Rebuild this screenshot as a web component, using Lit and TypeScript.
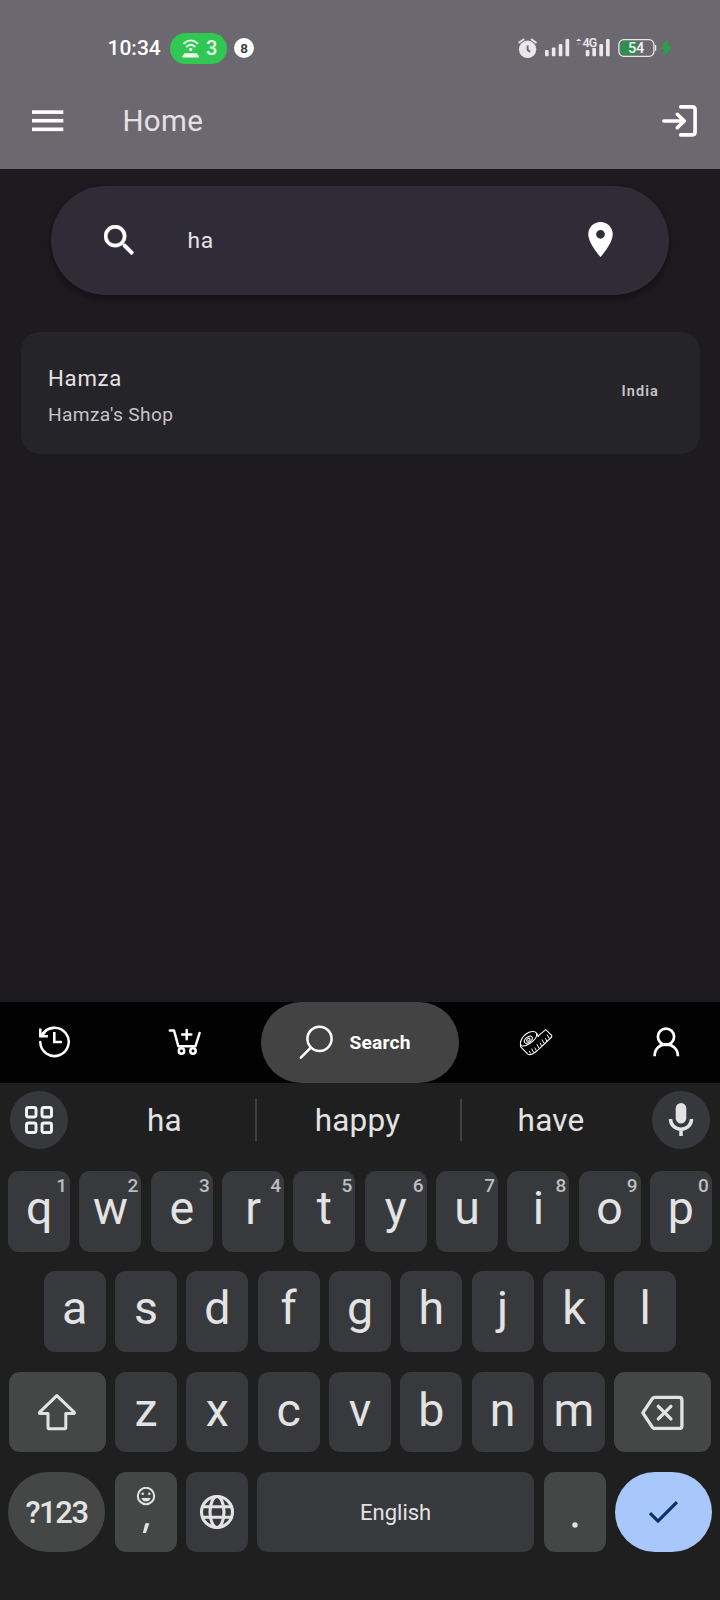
import { LitElement, html, css, svg } from "lit";
import { customElement, property } from "lit/decorators.js";

@customElement("status-bar")
class StatusBar extends LitElement {
  static styles = css`
    :host { display: flex; align-items: center; height: 96px; padding-left: 107.5px; box-sizing: border-box; }
    .time { font-size: 21px; font-weight: 500; line-height: 24px; color: #fff; width: 62px; }
    .pill { display: flex; align-items: center; width: 57.5px; height: 31px; border-radius: 16px; background: #30c752; }
    .pill svg { margin-left: 11px; }
    .count { margin-left: 7.5px; font-size: 20px; font-weight: 500; line-height: 24px; color: #eafbe9; }
    .badge { display: grid; place-items: center; margin-left: 7px; width: 20px; height: 20px; border-radius: 50%; background: #fff; color: #3a383e; font-size: 13.5px; font-weight: 600; line-height: 20px; }
    .right { display: flex; margin-left: 264px; }
    svg { display: block; }
    .g { font: 600 12.5px Roboto, sans-serif; letter-spacing: -0.9px; fill: #e9e7ea; stroke: #6b686f; stroke-width: 1.6px; paint-order: stroke; }
    .b { font: 500 14.5px Roboto, sans-serif; letter-spacing: -0.2px; fill: #f4f4f4; }
  `;
  render() {
    return html`
      <div class="time">10:34</div>
      <div class="pill">
        <svg width="18" height="20" viewBox="180 37 18 20" fill="none" stroke="#eafbe9" stroke-width="1.9" stroke-linecap="round">
          <path d="M183 42.400c4-4 9.500-4 13.500 0M185.800 45.500c2.500-2.300 5.500-2.300 8 0" />
          <circle cx="189.700" cy="48.400" r="1.700" fill="#eafbe9" stroke="none" />
          <path d="M183.500 52.300h12.500l2 3.300q.3.900-.8.900h-15.200q-1.100 0-.8-.9z" fill="#eafbe9" stroke="none" />
        </svg>
        <span class="count">3</span>
      </div>
      <div class="badge">8</div>
      <div class="right">
        <svg width="20" height="24" viewBox="518 36 20 24">
          <circle cx="527.600" cy="49.300" r="8.700" fill="#e9e7ea" />
          <path d="M519.300 42.400l4.200-3M535.900 42.400l-4.200-3" stroke="#e9e7ea" stroke-width="1.900" stroke-linecap="round" />
          <path d="M527.600 45.500v4.300l2.400 2.200" fill="none" stroke="#6b686f" stroke-width="1.900" />
        </svg>
        <svg width="38" height="24" viewBox="538 36 38 24" fill="#e9e7ea">
          <rect x="545" y="50" width="3.700" height="6.300" rx="1" />
          <rect x="551.800" y="47.500" width="3.700" height="8.800" rx="1" />
          <rect x="558.700" y="44" width="3.700" height="12.300" rx="1" />
          <rect x="565.500" y="39" width="3.700" height="17.300" rx="1" />
        </svg>
        <svg width="42" height="24" viewBox="576 36 42 24" fill="#e9e7ea">
          <path d="M576 41l2.700-2.600 2.700 2.600z" />
          <path d="M576.500 43.300h4.400l-2.200 2z" opacity=".35" />
          <rect x="585.700" y="50" width="3.700" height="6.300" rx="1" />
          <rect x="592.300" y="47.500" width="3.700" height="8.800" rx="1" />
          <rect x="599.300" y="44" width="3.700" height="12.300" rx="1" />
          <rect x="606" y="39" width="3.700" height="17.300" rx="1" />
          <text class="g" x="582.500" y="46.900">4G</text>
        </svg>
        <svg width="56" height="24" viewBox="618 36 56 24">
          <path d="M637 41v14h-13q-3.500 0-3.500-3.500v-7q0-3.500 3.500-3.500z" fill="#2f8f4b" />
          <rect x="618.900" y="39.700" width="35" height="16.600" rx="4.800" fill="none" stroke="#e9e7ea" stroke-width="1.300" />
          <path d="M655.600 45v5.800" stroke="#e9e7ea" stroke-width="1.300" />
          <text class="b" x="628" y="53.200">54</text>
          <path d="M667 40.300l-6.500 8.400h4.200l-1 7.300 7.800-9.200h-4.300z" fill="#2ba04a" stroke="#2ba04a" />
        </svg>
      </div>
    `;
  }
}

@customElement("app-header")
class AppHeader extends LitElement {
  static styles = css`
    :host { display: block; height: 169px; background: #6b686f; }
    .bar { display: flex; align-items: center; height: 50px; padding: 0 23.5px 0 32px; }
    .title { flex: 1; margin-left: 58.5px; font-size: 29.5px; letter-spacing: 0.3px; line-height: 36px; color: #e6e1e5; }
    svg { display: block; }
  `;
  render() {
    return html`
      <status-bar></status-bar>
      <div class="bar">
        <svg width="32" height="22" viewBox="0 0 32 22" fill="#fff">
          <rect y=".3" width="31.300" height="3.600" /><rect y="8.900" width="31.300" height="3.600" /><rect y="17.500" width="31.300" height="3.600" />
        </svg>
        <div class="title">Home</div>
        <svg width="35" height="32" viewBox="662 105 35 32" fill="none" stroke="#fff" stroke-width="3.600" stroke-linecap="round" stroke-linejoin="round">
          <path d="M663.900 121h20.500M677.300 114.300l7 6.700-7 6.700" />
          <path d="M680.700 106.900h11.600q2.800 0 2.800 2.800v22.400q0 2.800-2.800 2.800h-11.600" />
        </svg>
      </div>
    `;
  }
}

@customElement("search-field")
class SearchField extends LitElement {
  @property() value = "";
  static styles = css`
    :host { display: flex; align-items: center; box-sizing: border-box; height: 109px; padding: 0 56px 1px 52.5px; border-radius: 55px; background: #2f2c37; box-shadow: 0 4px 10px rgba(0, 0, 0, 0.3), 0 2px 4px rgba(0, 0, 0, 0.2); }
    .text { flex: 1; margin: 2px 0 0 54px; font-size: 22.8px; letter-spacing: 0.8px; line-height: 30px; color: #e6e1e5; }
    svg { display: block; }
  `;
  render() {
    return html`
      <svg width="30" height="30" viewBox="3 3 17.490 17.490" fill="#fff" stroke="#fff" stroke-width=".25">
        <path d="M15.500 14h-.79l-.28-.27A6.471 6.471 0 0 0 16 9.500 6.500 6.500 0 1 0 9.500 16c1.610 0 3.090-.59 4.230-1.570l.27.28v.79l5 4.990L20.490 19l-4.990-5zm-6 0C7.010 14 5 11.990 5 9.500S7.010 5 9.500 5 14 7.010 14 9.500 11.990 14 9.500 14z" />
      </svg>
      <div class="text">${this.value}</div>
      <svg width="25" height="35" viewBox="5 2 14 20" fill="#fff">
        <path d="M12 2C8.130 2 5 5.130 5 9c0 5.250 7 13 7 13s7-7.750 7-13c0-3.870-3.130-7-7-7zm0 9.500a2.500 2.500 0 0 1 0-5 2.500 2.500 0 0 1 0 5z" />
      </svg>
    `;
  }
}

@customElement("result-card")
class ResultCard extends LitElement {
  @property() name = "";
  @property() shop = "";
  @property() country = "";
  static styles = css`
    :host { display: flex; align-items: center; justify-content: space-between; box-sizing: border-box; height: 122px; padding: 6px 40.5px 0 27.5px; border-radius: 19px; background: #252429; }
    .name { font-size: 22.2px; letter-spacing: 0.75px; line-height: 30px; color: #e6e1e5; }
    .shop { margin-top: 9px; font-size: 19.2px; letter-spacing: 0.35px; line-height: 26px; color: #c8c3ca; }
    .country { margin-top: -8px; font-size: 14.5px; font-weight: 600; letter-spacing: 1.1px; line-height: 20px; color: #c8c3ca; }
  `;
  render() {
    return html`
      <div><div class="name">${this.name}</div><div class="shop">${this.shop}</div></div>
      <div class="country">${this.country}</div>
    `;
  }
}

@customElement("bottom-nav")
class BottomNav extends LitElement {
  static styles = css`
    :host { display: grid; grid-template-columns: 109px 152px 198px 153px 108px; height: 81px; background: #020202; }
    .item { display: grid; place-items: center; padding-bottom: 1px; }
    .cart { padding-right: 1px; }
    .user { padding-right: 1px; }
    .active { display: flex; align-items: center; border-radius: 41px; background: #434343; color: #fff; font-size: 19.2px; letter-spacing: 0.2px; font-weight: 700; line-height: 24px; }
    .active svg { margin-left: 37px; }
    .active span { margin: 1px 0 0 15.5px; }
    svg { display: block; fill: none; stroke: #fff; }
  `;
  render() {
    return html`
      <div class="item">
        <svg width="34" height="34" viewBox="38 1025 34 34" stroke-width="2.500">
          <path d="M40.300 1042a14.200 14.200 0 1 0 2.500-8.200" stroke-linecap="round" />
          <path d="M42.500 1034.500q4-6.500 12-6.700" />
          <path d="M40.300 1028.500v7.800h7.600" />
          <path d="M40.300 1036.300l4.500-4.200" stroke-width="3" />
          <path d="M54.300 1032v10h7.600" stroke-width="2.600" />
        </svg>
      </div>
      <div class="item cart">
        <svg width="34" height="30" viewBox="167.500 1028 34 30" stroke-width="2.500" stroke-linecap="round" stroke-linejoin="round">
          <path d="M169.300 1031.500h4.200l4.300 15.700h17.200l4.100-13.200" />
          <path d="M186.200 1031v9.300M181.600 1035.600h9.200" />
          <circle cx="181" cy="1052" r="2.700" /><circle cx="192.500" cy="1052" r="2.700" />
        </svg>
      </div>
      <div class="item active">
        <svg width="36" height="35" viewBox="298 1024 36 35" stroke-width="2.500" stroke-linecap="round">
          <circle cx="319.500" cy="1037.800" r="12.100" /><path d="M310.800 1046.600l-10 10" />
        </svg>
        <span>Search</span>
      </div>
      <div class="item">
        <svg width="34" height="28" viewBox="519 1029 34 28" stroke-width="1.050" stroke-linejoin="round">
          <path d="M520.500 1043q2-6.500 8.500-9.700 5.500-1.900 7.500.8 1.200 5-6 9.900-5.500 3.800-9 2.700-1.600-1-1-3.700z" />
          <ellipse cx="528.300" cy="1040.700" rx="4.600" ry="2.600" transform="rotate(-38 528.300 1040.700)" />
          <ellipse cx="528.300" cy="1040.700" rx="2" ry="1.100" transform="rotate(-38 528.300 1040.700)" />
          <path d="M520.500 1044.500v3.200l7.300 7.400q1.800.9 4 .2l4.700-3 15.200-14.300v-1.700l-6-5.600-8 6.600" />
          <path d="M537 1034.500l1.500 3.500" />
          <path d="M530.500 1054.500l-1.200-2.600M533.600 1053.500l-2-4M536.300 1051.600l-1.500-3M539 1049.300l-2.100-4.100M541.600 1046.900l-1.400-2.900M544.200 1044.500l-2.200-4M546.800 1042l-1.400-2.800M549.400 1039.600l-2.200-3.900" stroke-width="1" />
        </svg>
      </div>
      <div class="item user">
        <svg width="28" height="30" viewBox="651.500 1026.500 28 30" stroke-width="2.700">
          <circle cx="665.500" cy="1036.300" r="8.100" /><path d="M654.100 1055.700c0-7.700 5-11.800 11.400-11.800s11.900 4.100 11.900 11.800" />
        </svg>
      </div>
    `;
  }
}

const LETTER_ROWS = ["qwertyuiop", "asdfghjkl", "zxcvbnm"];

@customElement("soft-keyboard")
class SoftKeyboard extends LitElement {
  static styles = css`
    :host { display: block; height: 517px; background: #1f1f1f; color: #e3e3e3; }
    .strip { display: grid; grid-template-columns: 68px 177px 2px 203px 2px 180px 10px 58px; padding-left: 10px; height: 74px; align-items: center; }
    .round { display: grid; place-items: center; width: 58px; height: 58px; border-radius: 50%; background: #37383c; }
    .word { text-align: center; font-size: 31.5px; letter-spacing: 0.2px; line-height: 40px; padding: 2px 2px 0 0; }
    .first { padding-right: 4px; }
    .rule { height: 42px; background: #404143; }
    .mic { grid-column: 8; }
    .rows { display: grid; gap: 19.7px; padding: 14px 8px 0; }
    .row { display: flex; justify-content: center; gap: 9.320px; height: 80.600px; }
    .key { position: relative; display: flex; align-items: center; justify-content: center; box-sizing: border-box; width: 62px; border-radius: 11px; background: #38393d; }
    .letter { padding-bottom: 6px; font-size: 46.5px; line-height: 54px; }
    .mid .letter { padding-bottom: 8px; }
    .low .letter { padding-bottom: 4px; }
    .hint { position: absolute; top: 5px; right: 3px; font-size: 19px; font-weight: 500; line-height: 20px; color: #bdbec0; }
    .alt { background: #444746; }
    .wide { width: 97.200px; }
    .oval { border-radius: 40px; }
    .sym { padding: 1px 0 0 0; font-size: 31px; font-weight: 500; letter-spacing: -1.4px; line-height: 40px; }
    .space { flex: 1; padding-top: 1px; font-size: 22px; line-height: 30px; }
    .enter { background: #a8c7fa; }
    svg { display: block; }
  `;

  private letters(row: string, hints = false) {
    return [...row].map(
      (c, i) => html`<div class="key letter">${c}${hints ? html`<span class="hint">${(i + 1) % 10}</span>` : ""}</div>`
    );
  }

  render() {
    return html`
      <div class="strip">
        <div class="round">
          <svg width="28" height="28" viewBox="0 0 28 28" fill="none" stroke="#f4f4f4" stroke-width="2.900">
            ${[[1.5, 1.5], [17, 1.5], [1.5, 17], [17, 17]].map(([x, y]) => svg`<rect x=${x} y=${y} width="9.500" height="9.500" rx="2" />`)}
          </svg>
        </div>
        <div class="word first">ha</div>
        <div class="rule"></div>
        <div class="word">happy</div>
        <div class="rule"></div>
        <div class="word">have</div>
        <div class="round mic">
          <svg width="26" height="34" viewBox="668 1103 26 34" fill="none" stroke="#e3e3e3">
            <rect x="675.700" y="1103" width="10.600" height="20.500" rx="5.300" fill="#e3e3e3" stroke="none" />
            <path d="M670.500 1119c0 6 4.600 10.200 10.500 10.200s10.500-4.200 10.500-10.200M681 1129v7" stroke-width="3.500" />
          </svg>
        </div>
      </div>
      <div class="rows">
        <div class="row">${this.letters(LETTER_ROWS[0], true)}</div>
        <div class="row mid">${this.letters(LETTER_ROWS[1])}</div>
        <div class="row low">
          <div class="key alt wide">
            <svg width="40" height="38" viewBox="36.500 1392.500 40 38" fill="none" stroke="#e3e3e3" stroke-width="3" stroke-linejoin="round">
              <path d="M56.300 1395.200l-17.300 16.700q-.6 1 .6 1h7.900v14q0 1.300 1.300 1.300h15.200q1.300 0 1.300-1.300v-14h7.900q1.200 0 .6-1z" />
            </svg>
          </div>
          ${this.letters(LETTER_ROWS[2])}
          <div class="key alt wide">
            <svg width="46" height="36" viewBox="640.500 1395 46 36" fill="none" stroke="#e3e3e3" stroke-width="3.300" stroke-linejoin="round">
              <path d="M655.500 1398.300h24.300q2.600 0 2.600 2.600v26q0 2.600-2.600 2.600h-24.300q-1.800 0-2.700-1.400l-9.500-14.300 9.500-14.100q.9-1.400 2.700-1.400z" />
              <path d="M658.800 1407.300l12.600 12.600M671.400 1407.300l-12.600 12.600" stroke-linecap="round" />
            </svg>
          </div>
        </div>
        <div class="row">
          <div class="key alt wide oval sym">?123</div>
          <div class="key alt">
            <svg width="20" height="50" viewBox="135.600 1487 20 50">
              <circle cx="145.600" cy="1496" r="8.200" fill="none" stroke="#e3e3e3" stroke-width="2" />
              <circle cx="142.300" cy="1493.800" r="1.300" fill="#e3e3e3" /><circle cx="148.900" cy="1493.800" r="1.300" fill="#e3e3e3" />
              <path d="M140.900 1498h9.400q-1.300 3.600-4.700 3.600t-4.700-3.600z" fill="#e3e3e3" />
              <path d="M144.900 1523.200h4.100l-3.400 9.800h-3.200z" fill="#e3e3e3" />
            </svg>
          </div>
          <div class="key">
            <svg width="36" height="36" viewBox="-18 -18 36 36" fill="none" stroke="#e3e3e3" stroke-width="3.100">
              <circle r="15.500" /><ellipse rx="7" ry="15.500" /><path d="M-14.500-5.300h29M-14.500 5.300h29" />
            </svg>
          </div>
          <div class="key space">English</div>
          <div class="key alt">
            <svg width="8" height="32" viewBox="0 0 8 32"><circle cx="4" cy="29" r="2.700" fill="#e3e3e3" /></svg>
          </div>
          <div class="key wide oval enter">
            <svg width="32" height="26" viewBox="647 1499.500 32 26" fill="none" stroke="#0a2f6b" stroke-width="3.200">
              <path d="M650 1513.700l8 7.900 18.900-18.900" />
            </svg>
          </div>
        </div>
      </div>
    `;
  }
}

@customElement("app-root")
class AppRoot extends LitElement {
  static styles = css`
    :host { display: flex; flex-direction: column; height: 1600px; background: #1d1b20; font-family: Roboto, "Liberation Sans", sans-serif; overflow: hidden; }
    main { flex: 1; display: flex; flex-direction: column; padding: 16.500px 20.500px 0; gap: 37px; }
    search-field { margin: 0 30.500px; }
  `;
  render() {
    return html`
      <app-header></app-header>
      <main>
        <search-field value="ha"></search-field>
        <result-card name="Hamza" shop="Hamza's Shop" country="India"></result-card>
      </main>
      <bottom-nav></bottom-nav>
      <soft-keyboard></soft-keyboard>
    `;
  }
}
